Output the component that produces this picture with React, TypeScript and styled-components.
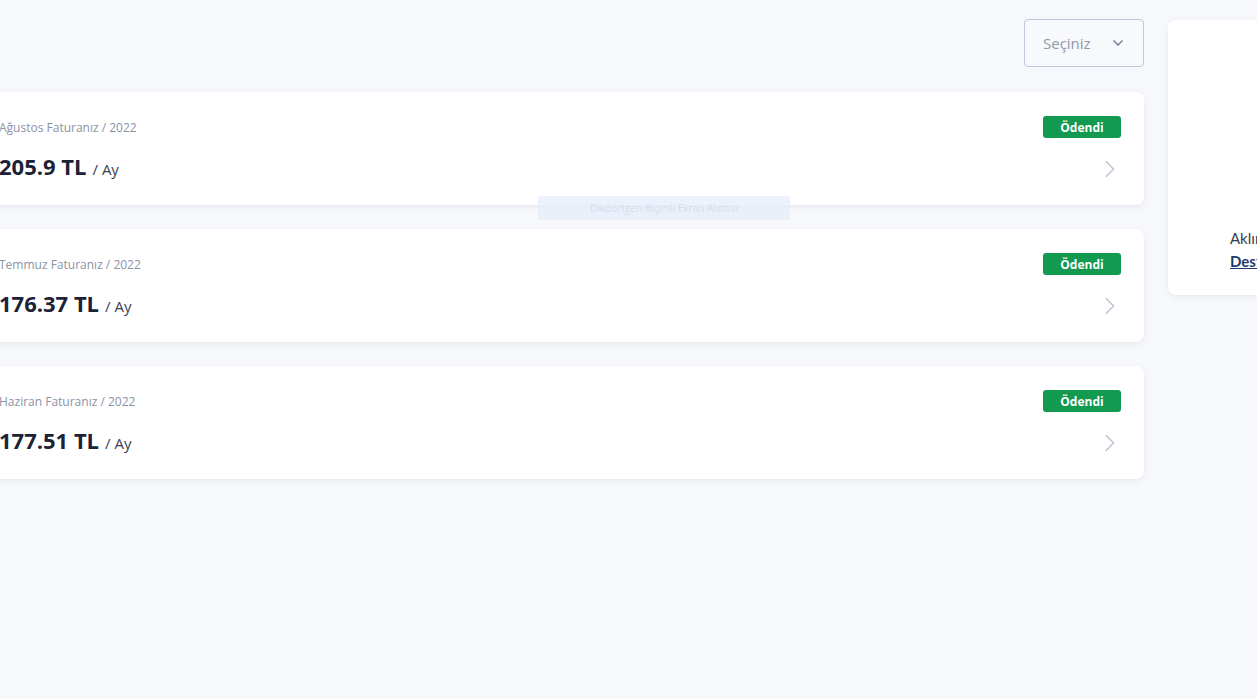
import React from "react";
import styled, { createGlobalStyle } from "styled-components";

const Global = createGlobalStyle`
  html, body { margin: 0; padding: 0; background: #f7f8fb; overflow: hidden; }
  body { font-family: "Open Sans", "Noto Sans", sans-serif; width: 1257px; height: 699px; }
`;

const Page = styled.div`
  display: flex;
  align-items: flex-start;
  gap: 24px;
  margin-left: -25px;
  padding-top: 19px;
  width: 1600px;
  position: relative;
`;

const Main = styled.div`
  width: 1169px;
  display: flex;
  flex-direction: column;
`;

const Toolbar = styled.div`
  display: flex;
  justify-content: flex-end;
  margin-bottom: 25px;
`;

const Select = styled.div`
  box-sizing: border-box;
  width: 120px;
  height: 48px;
  border: 1.5px solid #bfc5da;
  border-radius: 4px;
  display: flex;
  align-items: center;
  justify-content: space-between;
  padding: 0 17px 0 18px;
  color: #8f97a8;
  font-size: 15px;
  background: #f8f9fc;
`;

const List = styled.div`
  display: flex;
  flex-direction: column;
  gap: 24px;
`;

const Card = styled.div`
  box-sizing: border-box;
  background: #ffffff;
  border-radius: 8px;
  box-shadow: 0 2px 6px rgba(40, 60, 110, 0.08);
  height: 113px;
  padding: 24px 23px 0 24px;
  display: flex;
  flex-direction: column;
`;

const Row = styled.div`
  display: flex;
  align-items: center;
  justify-content: space-between;
`;

const Label = styled.div`
  font-size: 12px;
  color: #8a93a6;
`;

const Badge = styled.div`
  background: #119a50;
  color: #fff;
  font-weight: 700;
  font-size: 12px;
  border-radius: 3px;
  width: 78px;
  height: 22px;
  display: flex;
  align-items: center;
  justify-content: center;
`;

const AmountRow = styled(Row)`
  margin-top: 13px;
  padding-right: 1px;
`;

const Amount = styled.div`
  display: flex;
  align-items: baseline;
  gap: 6px;
`;

const Value = styled.span`
  font-size: 22px;
  font-weight: 700;
  color: #1c2236;
`;

const Unit = styled.span`
  font-size: 15px;
  color: #3a4152;
`;

const Arrow = styled.span`
  display: flex;
  margin-top: 6px;
`;

const Side = styled.div`
  box-sizing: border-box;
  width: 300px;
  height: 275px;
  margin-top: 1px;
  background: #fff;
  border-radius: 8px;
  box-shadow: 0 2px 6px rgba(40, 60, 110, 0.08);
  padding: 207px 0 0 62px;
  font-family: "Lato", "Open Sans", sans-serif;
  font-size: 15px;
  line-height: 23px;
  color: #353b4a;
`;

const SideLink = styled.a`
  color: #1f3a6e;
  font-weight: 700;
  text-decoration: underline;
`;

const Tip = styled.div`
  position: absolute;
  left: 563px;
  top: 196px;
  width: 252px;
  height: 24px;
  background: rgba(228, 238, 249, 0.75);
  color: rgba(170, 182, 205, 0.35);
  font-size: 10px;
  display: flex;
  align-items: center;
  justify-content: center;
`;

const Chevron = ({ size, color, dir }: { size: number; color: string; dir: "down" | "right" }) => (
  <svg width={size} height={size} viewBox="0 0 24 24" fill="none" stroke={color} strokeWidth={dir === "down" ? 2.6 : 1.8} strokeLinecap="round" strokeLinejoin="round">
    {dir === "down" ? <path d="M6 9l6 6 6-6" /> : <path d="M9 4l8 8-8 8" />}
  </svg>
);

const bills = [
  { label: "Ağustos Faturanız / 2022", value: "205.9 TL" },
  { label: "Temmuz Faturanız / 2022", value: "176.37 TL" },
  { label: "Haziran Faturanız / 2022", value: "177.51 TL" },
];

export default function App() {
  return (
    <>
      <Global />
      <Page>
        <Main>
          <Toolbar>
            <Select>
              <span>Seçiniz</span>
              <Chevron size={16} color="#7c86a0" dir="down" />
            </Select>
          </Toolbar>
          <List>
            {bills.map((b) => (
              <Card key={b.label}>
                <Row>
                  <Label>{b.label}</Label>
                  <Badge>Ödendi</Badge>
                </Row>
                <AmountRow>
                  <Amount>
                    <Value>{b.value}</Value>
                    <Unit>/ Ay</Unit>
                  </Amount>
                  <Arrow>
                    <Chevron size={22} color="#c3c8d4" dir="right" />
                  </Arrow>
                </AmountRow>
              </Card>
            ))}
          </List>
        </Main>
        <Side>
          <div>Aklınıza takılan bir soru mu var?</div>
          <SideLink>Destek</SideLink>
        </Side>
        <Tip>Dikdörtgen Biçimli Ekran Alıntısı</Tip>
      </Page>
    </>
  );
}
